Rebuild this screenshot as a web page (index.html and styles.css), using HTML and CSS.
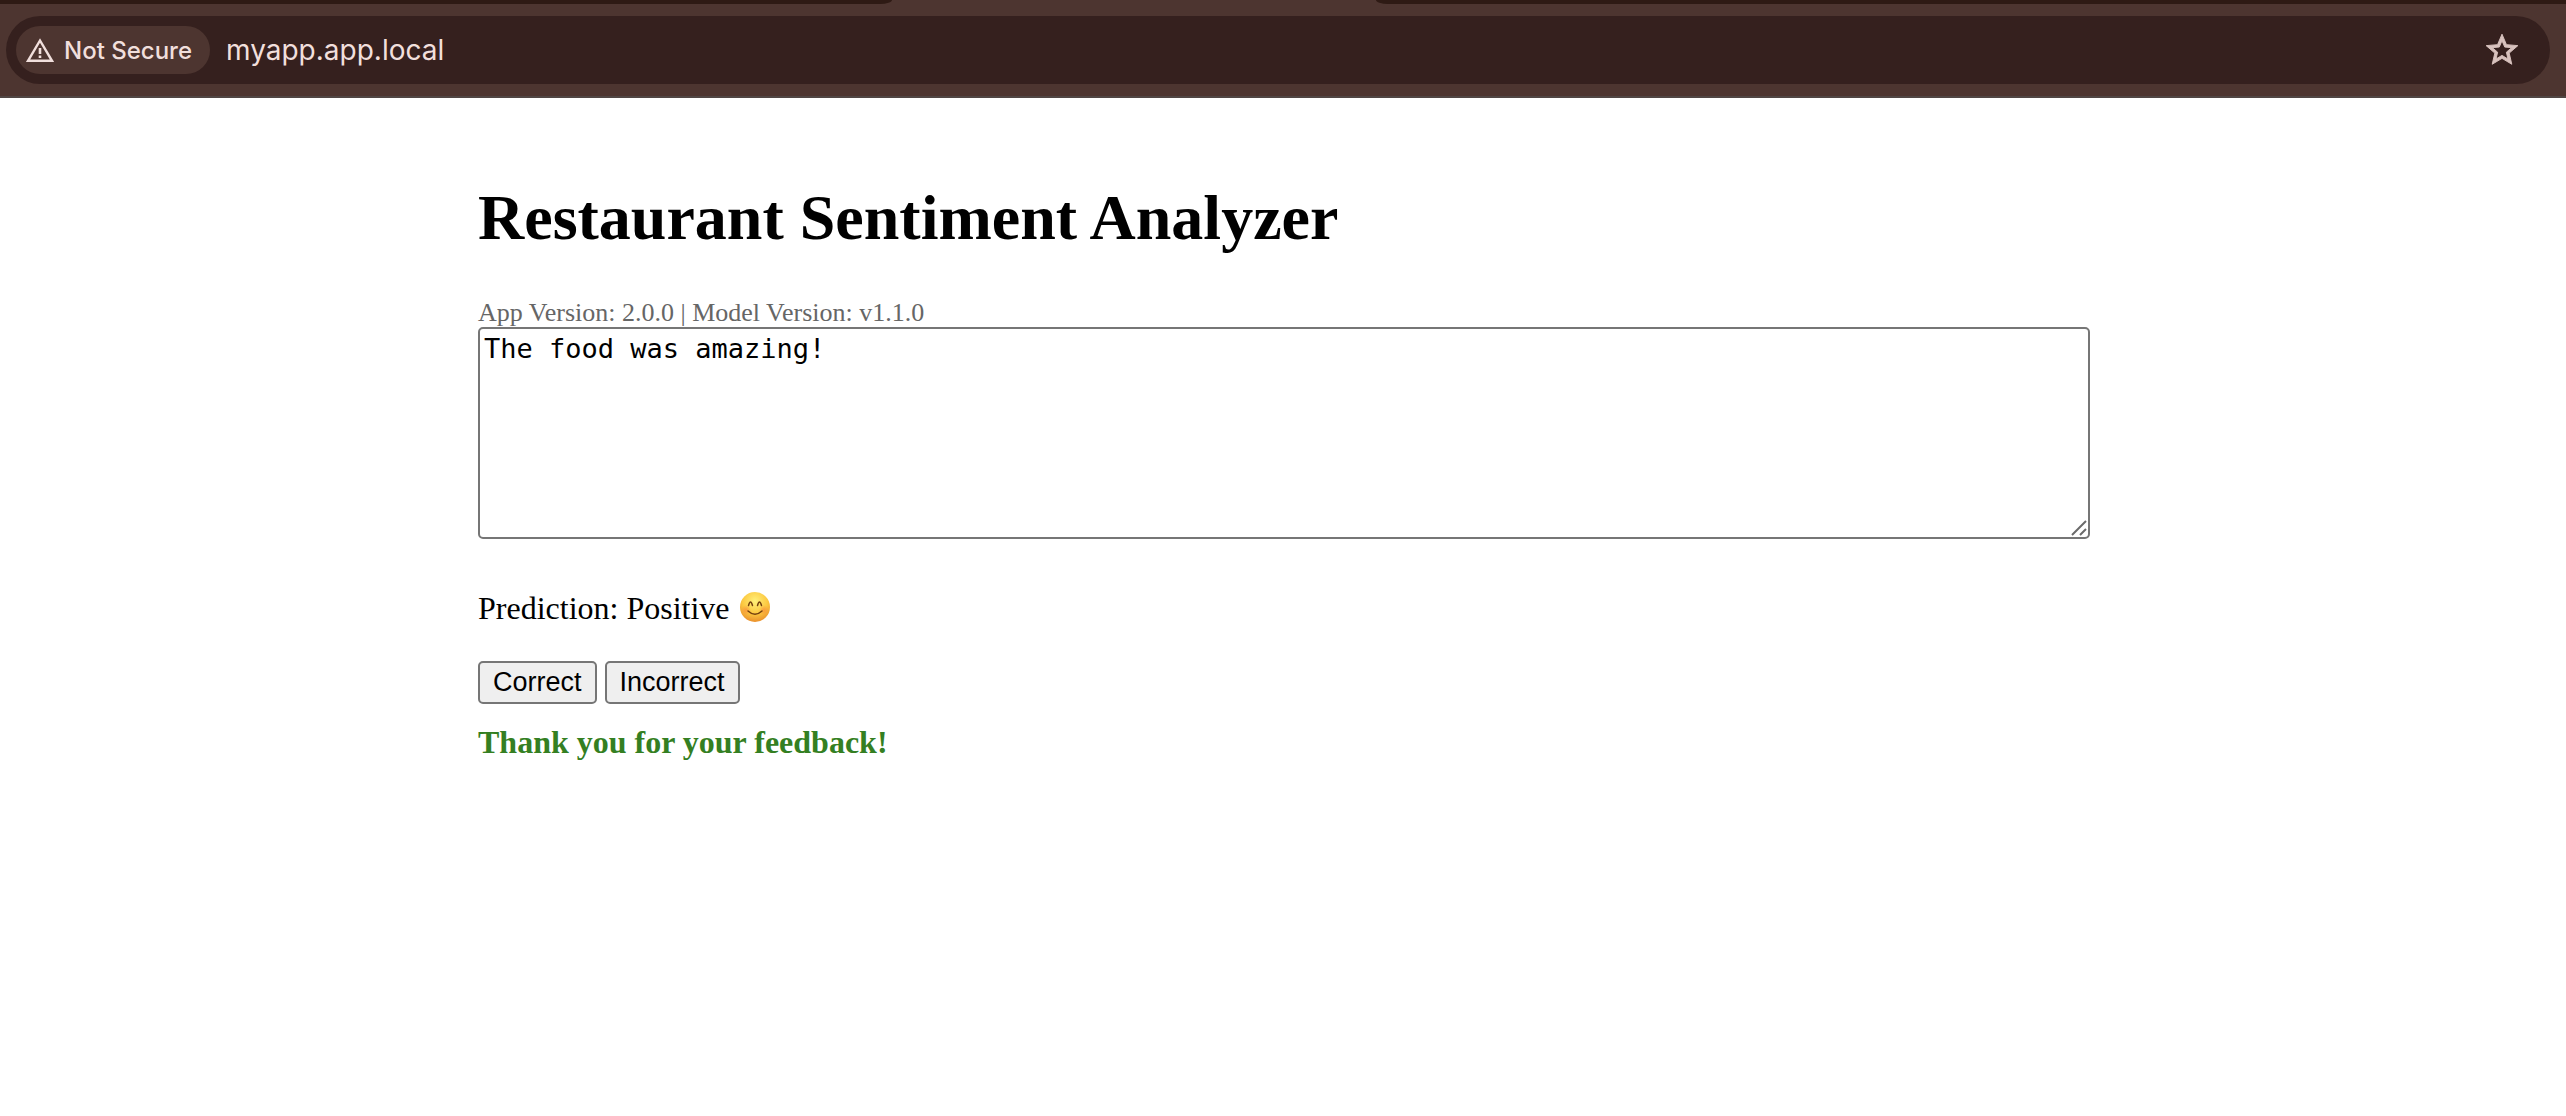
FILE: index.html
```html
<!DOCTYPE html>
<html lang="en">
<head>
<meta charset="utf-8">
<title>Restaurant Sentiment Analyzer</title>
<link rel="stylesheet" href="styles.css">
</head>
<body>
<header class="browser">
  <div class="tabs">
    <div class="tabs-before"></div>
    <div class="tab-active"></div>
    <div class="tabs-after"></div>
  </div>
  <div class="toolbar">
    <div class="omnibox">
      <button class="chip" type="button">
        <svg class="chip-icon" viewBox="0 0 28 24" aria-hidden="true">
          <path d="M2 22.800L14 2.500L26 22.800Z" fill="none" stroke="currentColor" stroke-width="2.400"/>
          <path d="M12.700 10h2.600v6h-2.600zM12.700 17.500h2.600v2.500h-2.600z" fill="currentColor"/>
        </svg>
        Not Secure
      </button>
      <input class="url" type="text" value="myapp.app.local" aria-label="Address">
      <button class="star" type="button" aria-label="Bookmark this page">
        <svg class="star-icon" viewBox="0 0 24 24" aria-hidden="true">
          <path fill="currentColor" stroke="currentColor" stroke-width="0.600" d="M22 9.240l-7.190-.62L12 2 9.190 8.630 2 9.240l5.460 4.730L5.820 21 12 17.270 18.180 21l-1.630-7.030L22 9.240zM12 15.400l-3.760 2.270 1-4.280-3.320-2.880 4.380-.38L12 6.100l1.710 4.040 4.380.38-3.320 2.880 1 4.280L12 15.400z"/>
        </svg>
      </button>
    </div>
  </div>
</header>
<main class="page">
  <h1 class="title">Restaurant Sentiment Analyzer</h1>
  <div class="version">App Version: 2.0.0 | Model Version: v1.1.0</div>
  <div class="review">
    <textarea class="review-input" aria-label="Review">The food was amazing!</textarea>
    <svg class="grip" viewBox="0 0 16 16" aria-hidden="true">
      <path d="M1 15L15 1M9 15L15 9" stroke="#6b6b6b" stroke-width="2"/>
    </svg>
  </div>
  <p class="prediction">Prediction: Positive
    <svg class="emoji" viewBox="0 0 30 30" role="img" aria-label="Smiling face">
      <defs>
        <radialGradient id="face" cx="50%" cy="30%" r="70%">
          <stop offset="0" stop-color="#fff07a"/>
          <stop offset="0.6" stop-color="#fcc840"/>
          <stop offset="1" stop-color="#ea902c"/>
        </radialGradient>
        <radialGradient id="blush">
          <stop offset="0" stop-color="#f98a3c" stop-opacity="0.700"/>
          <stop offset="1" stop-color="#f98a3c" stop-opacity="0"/>
        </radialGradient>
      </defs>
      <circle cx="15" cy="15" r="15" fill="url(#face)"/>
      <circle cx="6" cy="18" r="5" fill="url(#blush)"/>
      <circle cx="24" cy="18" r="5" fill="url(#blush)"/>
      <path d="M8.500 13.500Q10.500 6.500 12.500 13.500M17.500 13.500Q19.500 6.500 21.500 13.500M8 19Q15 25.500 22 19" fill="none" stroke="#74400f" stroke-width="1.500" stroke-linecap="round"/>
    </svg>
  </p>
  <div class="actions">
    <button class="answer" type="button">Correct</button>
    <button class="answer" type="button">Incorrect</button>
  </div>
  <p class="thanks">Thank you for your feedback!</p>
</main>
</body>
</html>
```
FILE: styles.css
```css
* {
  box-sizing: border-box;
}

body {
  margin: 0;
  background: #fff;
  color: #000;
  font-family: "Liberation Serif", "Times New Roman", serif;
  font-size: 32px;
}

.browser {
  background: #4d3530;
  border-bottom: 2px solid #504644;
  color: #f1dfdc;
  font-family: Inter, sans-serif;
}

.tabs {
  display: flex;
  height: 4px;
}

.tabs-before {
  flex: 892;
  background: #2e1a14;
  border-bottom-right-radius: 12px 4px;
}

.tab-active {
  flex: 484;
}

.tabs-after {
  flex: 1190;
  background: #2e1a14;
  border-bottom-left-radius: 12px 4px;
}

.toolbar {
  padding: 12px 16px 12px 6px;
}

.omnibox {
  display: flex;
  align-items: center;
  height: 68px;
  padding: 0 29px 0 10px;
  border-radius: 34px;
  background: #35201e;
}

.chip {
  display: flex;
  align-items: center;
  gap: 10px;
  height: 48px;
  padding: 0 18px 0 10px;
  border: 0;
  border-radius: 24px;
  background: #4d3530;
  color: inherit;
  font: 500 24px Inter, sans-serif;
  white-space: nowrap;
}

.chip-icon {
  width: 28px;
  height: 24px;
}

.url {
  flex: 1;
  min-width: 0;
  padding: 0 16px;
  border: 0;
  background: none;
  color: inherit;
  font: 28px Inter, sans-serif;
}

.star {
  display: flex;
  padding: 0;
  border: 0;
  background: none;
  color: #d8c2be;
}

.star-icon {
  width: 38px;
  height: 38px;
}

.page {
  max-width: 1614px;
  margin: 0 auto;
  padding: 83px 0 0 2px;
}

.title {
  margin: 0 0 43px;
  font-size: 64px;
  line-height: 74px;
}

.version {
  color: #666;
  font-size: 26px;
  line-height: 29px;
}

.review {
  position: relative;
}

.review-input {
  display: block;
  width: 100%;
  height: 212px;
  padding: 4px;
  border: 2px solid #767676;
  border-radius: 5px;
  resize: none;
  color: #000;
  font: 27px/32px "DejaVu Sans Mono", monospace;
}

.grip {
  position: absolute;
  right: 3px;
  bottom: 3px;
  width: 16px;
  height: 16px;
}

.prediction {
  margin: 50px 0 34px;
  line-height: 38px;
}

.emoji {
  width: 30px;
  height: 30px;
  margin-left: 2px;
  vertical-align: -3px;
}

.actions {
  display: flex;
  gap: 8px;
}

.answer {
  height: 43px;
  padding: 0 13px;
  border: 2px solid #767676;
  border-radius: 5px;
  background: #efefef;
  color: #000;
  font: 27px "Liberation Sans", Arial, sans-serif;
}

.thanks {
  margin: 19px 0 0;
  color: #347f22;
  font-weight: bold;
  line-height: 38px;
}
```
